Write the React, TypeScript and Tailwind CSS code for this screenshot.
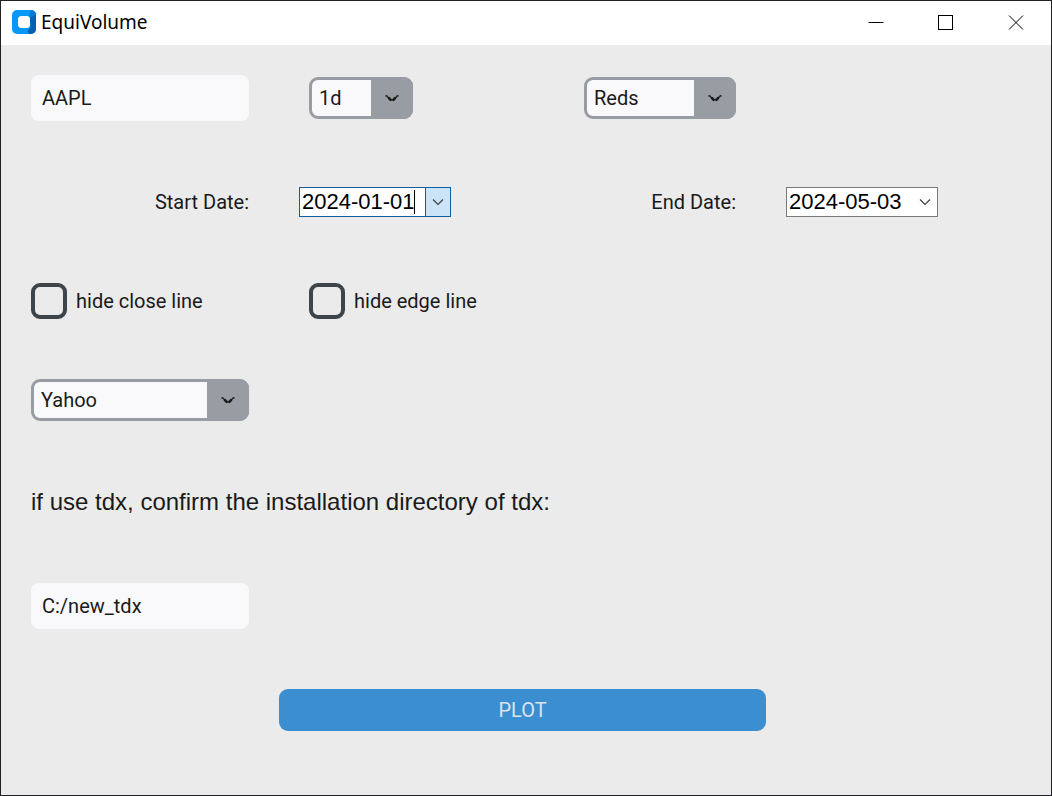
import { useState } from "react";
import type { ReactNode } from "react";

function Logo() {
  return (
    <svg width="24" height="24" viewBox="0 0 24 24" aria-hidden="true">
      <rect width="24" height="24" rx="5" fill="#0a98f8" />
      <path d="M18 6 23 2a5 5 0 0 1 1 3v14a5 5 0 0 1-5 5h-2l-1.500-3 3-3.500z" fill="#0560b0" />
      <path d="M19 0a5 5 0 0 1 5 5l-5 2.500-1.500-2z" fill="#0878cc" />
      <rect x="6" y="6" width="12" height="12" rx="3.500" fill="#fff" />
    </svg>
  );
}

function WindowButton({ label, children }: { label: string; children: ReactNode }) {
  return (
    <button type="button" aria-label={label} className="flex h-full w-[70px] items-center justify-center">
      <svg width="16" height="16" viewBox="0 0 16 16" fill="none" stroke="#000" aria-hidden="true">
        {children}
      </svg>
    </button>
  );
}

function TextField({ label, initial }: { label: string; initial: string }) {
  const [value, setValue] = useState(initial);
  return (
    <input
      type="text"
      aria-label={label}
      value={value}
      onChange={(e) => setValue(e.target.value)}
      className="h-[46px] w-full rounded-lg bg-[#f9f9fb] px-[11px] text-xl text-[#1a1a1a] outline-none"
    />
  );
}

function Dropdown({ label, options, width }: { label: string; options: string[]; width: string }) {
  return (
    <div className={"relative h-[42px] " + width}>
      <select
        aria-label={label}
        className="h-full w-full appearance-none rounded-[9px] border-3 border-[#979da2] bg-[#f9f9fb] pr-10 pl-[7px] text-xl text-[#1a1a1a] outline-none"
      >
        {options.map((option) => (
          <option key={option}>{option}</option>
        ))}
      </select>
      <span className="pointer-events-none absolute inset-y-0 right-0 flex w-[42px] items-center justify-center rounded-r-[9px] bg-[#979da2]">
        <svg width="16" height="10" viewBox="0 0 16 10" fill="none" stroke="#1a1a1a" strokeLinecap="round" aria-hidden="true">
          <path d="M1.500 3 3 2.500M14.500 3 13 2.500" strokeWidth="1" />
          <path d="M3 3.500 4.500 4.500M13 3.500 11.500 4.500" strokeWidth="1.500" />
          <path d="M5 5.200 6.600 6.800M11 5.200 9.400 6.800" strokeWidth="2.600" />
          <path d="M7 6.800h2" strokeWidth="1" />
        </svg>
      </span>
    </div>
  );
}

function DateField({ id, initial, active = false }: { id: string; initial: string; active?: boolean }) {
  const [value, setValue] = useState(initial);
  return (
    <div
      className={
        active
          ? "relative flex h-[30px] w-[152px] border border-[#0f5fa0] bg-white"
          : "relative flex h-[30px] w-[152px] border border-[#7a7a7a] bg-white"
      }
    >
      <input
        id={id}
        type="text"
        value={value}
        onChange={(e) => setValue(e.target.value)}
        className="min-w-0 flex-1 pl-0.5 font-['Liberation_Sans',sans-serif] text-[22px] leading-7 text-black outline-none"
      />
      {active && <span className="absolute top-0.5 left-[114px] h-6 w-px bg-black" />}
      <button
        type="button"
        aria-label="Open calendar"
        className={
          active
            ? "flex w-[25px] items-center justify-center border-l border-[#0f5fa0] bg-[#cce4f7]"
            : "flex w-[25px] items-center justify-center"
        }
      >
        <svg width="12" height="8" viewBox="0 0 12 8" fill="none" stroke="#404040" strokeWidth="1.200" aria-hidden="true">
          <path d="M1 1.500 6 6.500 11 1.500" />
        </svg>
      </button>
    </div>
  );
}

function CheckField({ label }: { label: string }) {
  return (
    <label className="flex items-center gap-[9px] text-xl whitespace-nowrap">
      <input
        type="checkbox"
        className="size-9 shrink-0 appearance-none rounded-[9px] border-4 border-[#3e454a] checked:bg-[#3b8ed0]"
      />
      {label}
    </label>
  );
}

export default function App() {
  return (
    <div className="flex min-h-screen flex-col border border-[#202026] bg-[#ebebeb] font-[Roboto,sans-serif] text-[#1a1a1a]">
      <header className="flex h-11 items-center bg-white">
        <div className="flex flex-1 items-center gap-[5px] pb-0.5 pl-[11px]">
          <Logo />
          <h1 className="font-['Noto_Sans',sans-serif] text-[19px] leading-6 text-black">EquiVolume</h1>
        </div>
        <WindowButton label="Minimize">
          <path d="M0.500 7.500h15" />
        </WindowButton>
        <WindowButton label="Maximize">
          <rect x="0.500" y="0.500" width="14" height="14" />
        </WindowButton>
        <WindowButton label="Close">
          <path d="M1 0.500l14 14M15 0.500l-14 14" />
        </WindowButton>
      </header>

      <main className="grid grid-cols-[278fr_275fr_212fr_285fr] items-center">
        <div className="p-[30px]">
          <TextField label="Symbol" initial="AAPL" />
        </div>
        <div className="px-[30px]">
          <Dropdown label="Interval" options={["1d", "1wk", "1mo"]} width="w-[104px]" />
        </div>
        <div className="col-span-2 px-[30px]">
          <Dropdown label="Colour map" options={["Reds", "Blues", "Greens"]} width="w-[152px]" />
        </div>

        <label htmlFor="start" className="py-9 pr-[30px] text-right text-xl leading-[30px]">
          Start Date:
        </label>
        <div className="pl-5">
          <DateField id="start" initial="2024-01-01" active />
        </div>
        <label htmlFor="end" className="py-9 pr-[30px] text-right text-xl leading-[30px]">
          End Date:
        </label>
        <div className="pl-5">
          <DateField id="end" initial="2024-05-03" />
        </div>

        <div className="p-[30px]">
          <CheckField label="hide close line" />
        </div>
        <div className="col-span-3 px-[30px]">
          <CheckField label="hide edge line" />
        </div>

        <div className="p-[30px]">
          <Dropdown label="Data source" options={["Yahoo", "tdx"]} width="w-full" />
        </div>

        <p className="col-span-4 px-[30px] py-9 font-['Liberation_Sans',sans-serif] text-2xl leading-[30px]">
          if use tdx, confirm the installation directory of tdx:
        </p>

        <div className="p-[30px]">
          <TextField label="tdx directory" initial="C:/new_tdx" />
        </div>

        <div className="col-span-2 col-start-2 row-start-7 py-[30px]">
          <button type="button" className="h-[42px] w-full rounded-[9px] bg-[#3b8ed0] text-xl text-[#dce4ee]">
            PLOT
          </button>
        </div>
      </main>
    </div>
  );
}
